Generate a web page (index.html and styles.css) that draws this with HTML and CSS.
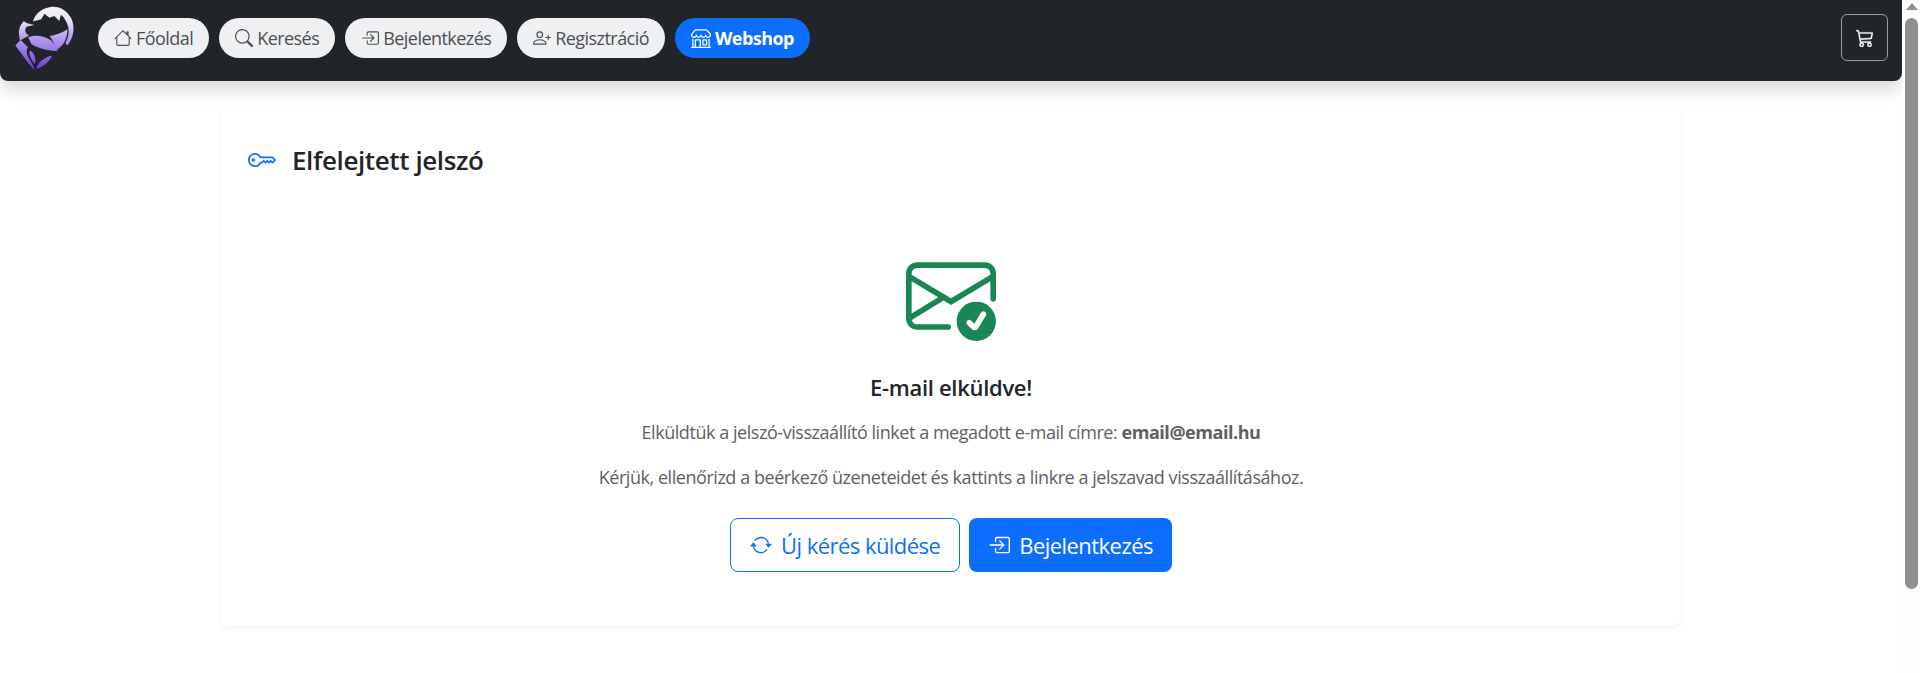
FILE: index.html
```html
<!DOCTYPE html>
<html lang="hu">
<head>
<meta charset="utf-8">
<title>Elfelejtett jelszó</title>
<link rel="stylesheet" href="styles.css">
</head>
<body>
<svg class="sprite" aria-hidden="true">
  <symbol id="i-house" viewBox="0 0 16 16"><path d="M8.707 1.5a1 1 0 0 0-1.414 0L.646 8.146a.5.5 0 0 0 .708.708L2 8.207V13.5A1.5 1.5 0 0 0 3.5 15h9a1.5 1.5 0 0 0 1.5-1.5V8.207l.646.647a.5.5 0 0 0 .708-.708L13 5.793V2.5a.5.5 0 0 0-.5-.5h-1a.5.5 0 0 0-.5.5v1.293L8.707 1.5ZM13 7.207V13.5a.5.5 0 0 1-.5.5h-9a.5.5 0 0 1-.5-.5V7.207l5-5 5 5Z"/></symbol>
  <symbol id="i-search" viewBox="0 0 16 16"><path d="M11.742 10.344a6.5 6.5 0 1 0-1.397 1.398h-.001c.03.04.062.078.098.115l3.85 3.85a1 1 0 0 0 1.415-1.414l-3.85-3.85a1.007 1.007 0 0 0-.115-.1zM12 6.5a5.5 5.5 0 1 1-11 0 5.5 5.5 0 0 1 11 0z"/></symbol>
  <symbol id="i-login" viewBox="0 0 16 16"><path d="M6 3.5a.5.5 0 0 1 .5-.5h8a.5.5 0 0 1 .5.5v9a.5.5 0 0 1-.5.5h-8a.5.5 0 0 1-.5-.5v-2a.5.5 0 0 0-1 0v2A1.5 1.5 0 0 0 6.5 14h8a1.5 1.5 0 0 0 1.5-1.5v-9A1.5 1.5 0 0 0 14.5 2h-8A1.5 1.5 0 0 0 5 3.5v2a.5.5 0 0 0 1 0v-2z"/><path d="M11.854 8.354a.5.5 0 0 0 0-.708l-3-3a.5.5 0 1 0-.708.708L10.293 7.5H1.5a.5.5 0 0 0 0 1h8.793l-2.147 2.146a.5.5 0 0 0 .708.708l3-3z"/></symbol>
  <symbol id="i-person" viewBox="0 0 16 16"><path d="M6 8a3 3 0 1 0 0-6 3 3 0 0 0 0 6zm2-3a2 2 0 1 1-4 0 2 2 0 0 1 4 0zm4 8c0 1-1 1-1 1H1s-1 0-1-1 1-4 6-4 6 3 6 4zm-1-.004c-.001-.246-.154-.986-.832-1.664C9.516 10.68 8.289 10 6 10c-2.29 0-3.516.68-4.168 1.332-.678.678-.83 1.418-.832 1.664h10z"/><path d="M13.5 5a.5.5 0 0 1 .5.5V7h1.5a.5.5 0 0 1 0 1H14v1.5a.5.5 0 0 1-1 0V8h-1.5a.5.5 0 0 1 0-1H13V5.5a.5.5 0 0 1 .5-.5z"/></symbol>
  <symbol id="i-shop" viewBox="0 0 16 16"><path d="M2.97 1.35A1 1 0 0 1 3.73 1h8.54a1 1 0 0 1 .76.35l2.609 3.044A1.5 1.5 0 0 1 16 5.37v.255a2.375 2.375 0 0 1-4.25 1.458A2.371 2.371 0 0 1 9.875 8 2.37 2.37 0 0 1 8 7.083 2.37 2.37 0 0 1 6.125 8a2.37 2.37 0 0 1-1.875-.917A2.375 2.375 0 0 1 0 5.625V5.37a1.5 1.5 0 0 1 .361-.976l2.61-3.045zm1.78 4.275a1.375 1.375 0 0 0 2.75 0 .5.5 0 0 1 1 0 1.375 1.375 0 0 0 2.75 0 .5.5 0 0 1 1 0 1.375 1.375 0 1 0 2.75 0V5.37a.5.5 0 0 0-.12-.325L12.27 2H3.73L1.12 5.045A.5.5 0 0 0 1 5.37v.255a1.375 1.375 0 0 0 2.75 0 .5.5 0 0 1 1 0zM1.5 8.5A.5.5 0 0 1 2 9v6h1v-5a1 1 0 0 1 1-1h3a1 1 0 0 1 1 1v5h6V9a.5.5 0 0 1 1 0v6h.5a.5.5 0 0 1 0 1H.5a.5.5 0 0 1 0-1H1V9a.5.5 0 0 1 .5-.5zM4 15h3v-5H4v5zm5-5a1 1 0 0 1 1-1h2a1 1 0 0 1 1 1v3a1 1 0 0 1-1 1h-2a1 1 0 0 1-1-1v-3zm3 0h-2v3h2v-3z"/></symbol>
  <symbol id="i-cart" viewBox="0 0 16 16"><path d="M0 1.5A.5.5 0 0 1 .5 1H2a.5.5 0 0 1 .49.402L2.89 3H14.5a.5.5 0 0 1 .49.598l-1 5a.5.5 0 0 1-.465.401l-9.397.472L4.415 11H13a.5.5 0 0 1 0 1H4a.5.5 0 0 1-.491-.408L2.01 3.607 1.61 2H.5a.5.5 0 0 1-.5-.5zM3.102 4l.84 4.479 9.144-.459L13.89 4H3.102zM5 12a2 2 0 1 0 0 4 2 2 0 0 0 0-4zm7 0a2 2 0 1 0 0 4 2 2 0 0 0 0-4zm-7 1a1 1 0 1 1 0 2 1 1 0 0 1 0-2zm7 0a1 1 0 1 1 0 2 1 1 0 0 1 0-2z"/></symbol>
  <symbol id="i-key" viewBox="0 0 16 16"><path d="M0 8a4 4 0 0 1 7.465-2H14a.5.5 0 0 1 .354.146l1.5 1.5a.5.5 0 0 1 0 .708l-1.5 1.5a.5.5 0 0 1-.708 0L13 9.207l-.646.647a.5.5 0 0 1-.708 0L11 9.207l-.646.647a.5.5 0 0 1-.708 0L9 9.207l-.646.647A.5.5 0 0 1 8 10h-.535A4 4 0 0 1 0 8zm4-3a3 3 0 1 0 2.712 4.285A.5.5 0 0 1 7.163 9h.63l.853-.854a.5.5 0 0 1 .708 0l.646.647.646-.647a.5.5 0 0 1 .708 0l.646.647.646-.647a.5.5 0 0 1 .708 0l.646.647.793-.793-1-1h-6.63a.5.5 0 0 1-.451-.285A3 3 0 0 0 4 5z"/><path d="M4 8a1 1 0 1 1-2 0 1 1 0 0 1 2 0z"/></symbol>
  <symbol id="i-mail" viewBox="0 0 16 16"><path d="M2 2a2 2 0 0 0-2 2v8.01A2 2 0 0 0 2 14h5.5a.5.5 0 0 0 0-1H2a1 1 0 0 1-.966-.741l5.64-3.471L8 9.583l7-4.2V8.5a.5.5 0 0 0 1 0V4a2 2 0 0 0-2-2H2Zm3.708 6.208L1 11.105V5.383l4.708 2.825ZM1 4.217V4a1 1 0 0 1 1-1h12a1 1 0 0 1 1 1v.217l-7 4.2-7-4.2Z"/><path d="M16 12.5a3.5 3.5 0 1 1-7 0 3.5 3.5 0 0 1 7 0Zm-1.993-1.679a.5.5 0 0 0-.686.172l-1.17 1.95-.547-.547a.5.5 0 0 0-.708.708l.774.773a.75.75 0 0 0 1.174-.144l1.335-2.226a.5.5 0 0 0-.172-.686Z"/></symbol>
  <symbol id="i-repeat" viewBox="0 0 16 16"><path d="M11.534 7h3.932a.25.25 0 0 1 .192.41l-1.966 2.36a.25.25 0 0 1-.384 0l-1.966-2.36a.25.25 0 0 1 .192-.41zm-11 2h3.932a.25.25 0 0 0 .192-.41L2.692 6.23a.25.25 0 0 0-.384 0L.342 8.59A.25.25 0 0 0 .534 9z"/><path d="M8 3c-1.552 0-2.94.707-3.857 1.818a.5.5 0 1 1-.771-.636A6.002 6.002 0 0 1 13.917 7H12.9A5.002 5.002 0 0 0 8 3zM3.1 9a5.002 5.002 0 0 0 8.757 2.182.5.5 0 1 1 .771.636A6.002 6.002 0 0 1 2.083 9H3.1z"/></symbol>
</svg>
<div class="viewport">
  <div class="page">
    <header class="navbar">
      <a class="brand" href="#" aria-label="Logó">
        <svg class="logo" viewBox="45 12 183 200">
          <defs>
            <linearGradient id="logo-fill" gradientUnits="userSpaceOnUse" x1="0" y1="12" x2="0" y2="212">
              <stop offset="0" stop-color="#f6f5f9"/>
              <stop offset=".25" stop-color="#e6e0f4"/>
              <stop offset=".5" stop-color="#b49cee"/>
              <stop offset="1" stop-color="#6c3ad6"/>
            </linearGradient>
          </defs>
          <g class="logo-shapes">
            <path d="M100 62C105 40 125 22 150 18C175 12 205 25 218 55C228 80 225 110 205 135L198 128C212 105 212 80 200 60C195 50 190 44 185 42L180 60L165 45L150 50L135 38L125 55Z"/>
            <path d="M72 60C78 68 90 68 104 72L80 78C72 90 78 100 88 104L60 120C58 100 50 85 72 60Z"/>
            <path d="M85 110C105 100 135 105 155 120C165 130 172 140 175 152C150 150 115 145 95 130Z"/>
            <path d="M150 105C165 105 190 95 205 85C205 110 195 135 172 148C165 130 158 115 150 105Z"/>
            <path d="M46 135L62 118L85 140C78 148 80 160 88 175C95 185 100 195 105 210C90 195 75 175 65 160Z"/>
            <path d="M110 206C112 190 130 172 158 165C150 185 130 200 110 206Z"/>
            <path d="M90 150C102 155 110 170 106 192C96 180 86 165 90 150Z"/>
          </g>
        </svg>
      </a>
      <nav class="nav-pills">
        <a class="pill" href="#"><svg class="pill-icon"><use href="#i-house"/></svg>Főoldal</a>
        <a class="pill" href="#"><svg class="pill-icon"><use href="#i-search"/></svg>Keresés</a>
        <a class="pill" href="#"><svg class="pill-icon"><use href="#i-login"/></svg>Bejelentkezés</a>
        <a class="pill" href="#"><svg class="pill-icon"><use href="#i-person"/></svg>Regisztráció</a>
        <a class="pill pill-primary" href="#"><svg class="pill-icon"><use href="#i-shop"/></svg>Webshop</a>
      </nav>
      <a class="cart" href="#" aria-label="Kosár"><svg class="cart-icon"><use href="#i-cart"/></svg></a>
    </header>
    <main class="container">
      <section class="card">
        <h1 class="card-title"><svg class="key-icon"><use href="#i-key"/></svg>Elfelejtett jelszó</h1>
        <div class="result">
          <svg class="mail-icon"><use href="#i-mail"/></svg>
          <h2 class="result-title">E-mail elküldve!</h2>
          <p class="result-text">Elküldtük a jelszó-visszaállító linket a megadott e-mail címre: <strong>email@email.hu</strong></p>
          <p class="result-text">Kérjük, ellenőrizd a beérkező üzeneteidet és kattints a linkre a jelszavad visszaállításához.</p>
          <div class="actions">
            <a class="btn btn-outline" href="#"><svg class="btn-icon"><use href="#i-repeat"/></svg>Új kérés küldése</a>
            <a class="btn btn-solid" href="#"><svg class="btn-icon"><use href="#i-login"/></svg>Bejelentkezés</a>
          </div>
        </div>
      </section>
    </main>
  </div>
  <aside class="scrollbar" aria-hidden="true">
    <span class="scroll-arrow"></span>
    <span class="scroll-thumb"></span>
  </aside>
</div>
</body>
</html>
```
FILE: styles.css
```css
* { box-sizing: border-box; }
html, body { margin: 0; height: 100%; overflow: hidden; background: #fff; }
body { font-family: "Open Sans", "Noto Sans", sans-serif; color: #212529; }
a { text-decoration: none; color: inherit; }
.sprite { display: none; }
svg { fill: currentColor; flex: none; }

.viewport { display: flex; height: 673px; }
.page { flex: 1; min-width: 0; }

.navbar {
  height: 81px;
  background: #212529;
  border-radius: 0 0 8px 8px;
  box-shadow: 0 8px 18px rgba(0, 0, 0, .16);
  display: flex;
  align-items: center;
  padding: 0 14px 6px 15px;
}
.brand { display: flex; margin-right: 23px; }
.logo { width: 60px; height: 66px; }
.logo-shapes { fill: url(#logo-fill); }
.nav-pills { display: flex; gap: 10px; flex: 1; }
.pill {
  height: 40px;
  padding: 0 16px;
  border-radius: 20px;
  background: #eff0f1;
  color: #4a4f54;
  display: flex;
  align-items: center;
  font-size: 18px;
  letter-spacing: -.55px;
  white-space: nowrap;
}
.pill-icon { width: 18px; height: 18px; margin-right: 4px; }
.pill-primary { background: #0d6efd; color: #fff; font-weight: 700; }
.pill-primary .pill-icon { width: 20px; height: 20px; }
.cart {
  width: 47px;
  height: 47px;
  border: 1px solid rgba(255, 255, 255, .55);
  border-radius: 6px;
  color: #fff;
  display: flex;
  align-items: center;
  justify-content: center;
}
.cart-icon { width: 18px; height: 18px; stroke: currentColor; stroke-width: .35; }

.container { padding: 27px 222px 0; }
.card {
  height: 518px;
  border-radius: 8px;
  background: #fff;
  box-shadow: 0 2px 6px rgba(0, 0, 0, .06);
  padding: 26px;
}
.card-title {
  margin: 0;
  display: flex;
  align-items: center;
  gap: 16px;
  font-size: 26px;
  font-weight: 600;
  letter-spacing: -.4px;
  line-height: 52px;
  color: #212529;
}
.key-icon { width: 28px; height: 28px; color: #0d6efd; }
.result { display: flex; flex-direction: column; align-items: center; padding-top: 65px; }
.mail-icon { width: 90px; height: 90px; color: #198754; }
.result-title {
  margin: 31px 0 0;
  font-size: 22px;
  font-weight: 600;
  letter-spacing: -.3px;
  line-height: 30px;
  color: #212529;
}
.result-text {
  margin: 15px 0 0;
  font-size: 18px;
  letter-spacing: -.45px;
  line-height: 30px;
  color: #5c6166;
}
.result-text strong { font-weight: 700; }
.actions { display: flex; gap: 9px; margin-top: 26px; }
.btn {
  height: 54px;
  padding: 0 19px;
  border-radius: 8px;
  display: flex;
  align-items: center;
  font-size: 22px;
  letter-spacing: -.55px;
  white-space: nowrap;
}
.btn-icon { width: 22px; height: 22px; margin-right: 9px; }
.btn-outline { border: 1px solid #0d6efd; color: #0d6efd; }
.btn-solid { background: #0d6efd; color: #fff; }

.scrollbar {
  width: 18px;
  background: #fdfdfd;
  display: flex;
  flex-direction: column;
  align-items: center;
  padding-left: 1px;
}
.scroll-arrow {
  margin-top: 3px;
  width: 0;
  height: 0;
  border-left: 6px solid transparent;
  border-right: 6px solid transparent;
  border-bottom: 7px solid #8f8f8f;
}
.scroll-thumb {
  margin-top: 8px;
  width: 13px;
  height: 571px;
  background: #8f8f8f;
  border-radius: 7px;
}
```
